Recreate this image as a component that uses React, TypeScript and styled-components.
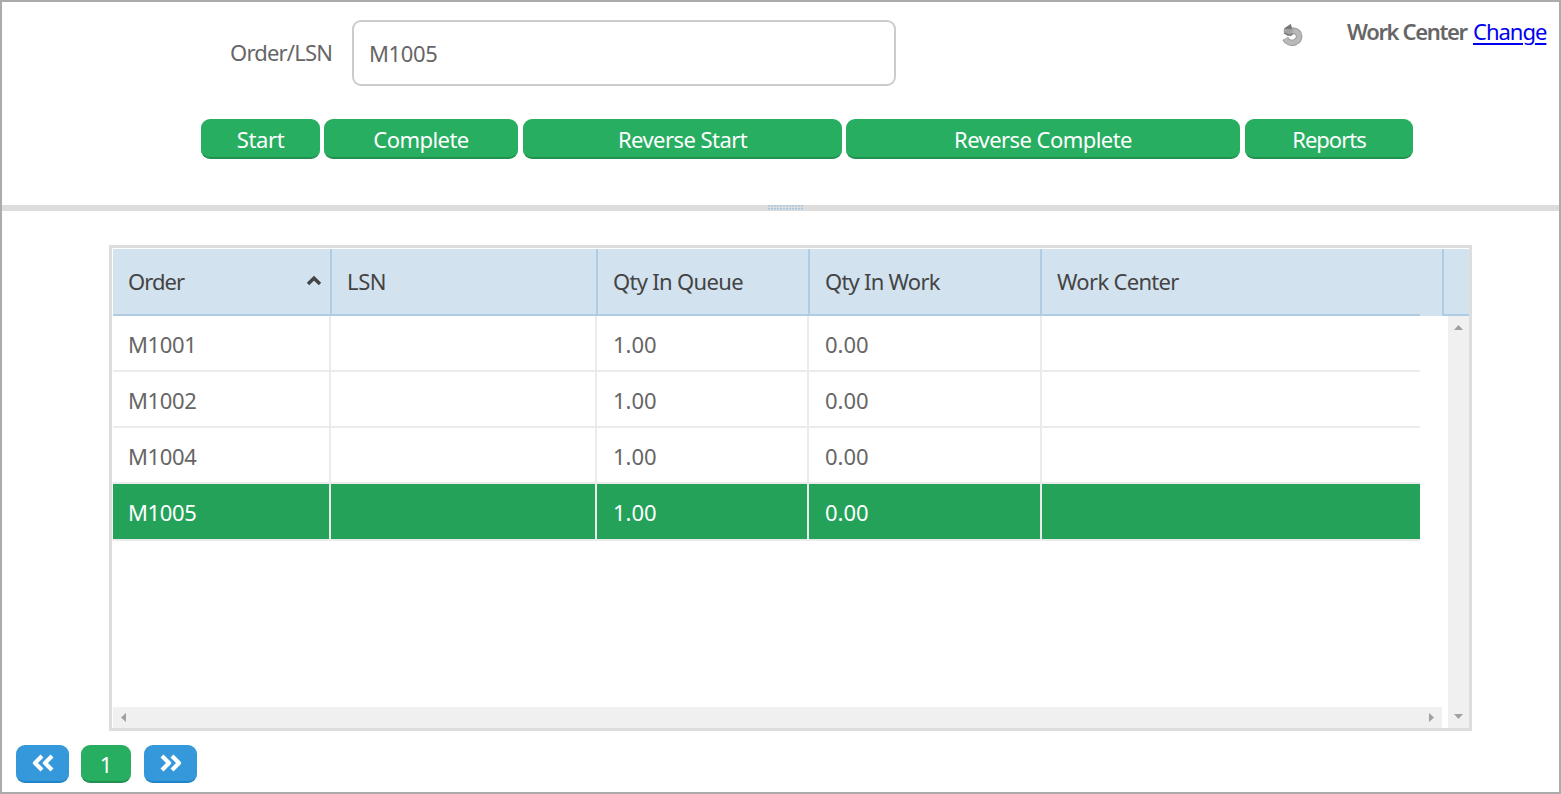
import React from "react";
import styled, { createGlobalStyle } from "styled-components";

const Global = createGlobalStyle`
  * { box-sizing: border-box; }
  body { margin: 0; background: #fff; font-family: "Noto Sans", "Open Sans", sans-serif; font-size: 22px; color: #666; }
  button, input { font: inherit; margin: 0; }
`;

const Frame = styled.main`
  width: 1561px;
  height: 794px;
  border: 2px solid #ababab;
  display: flex;
  flex-direction: column;
  overflow: hidden;
`;
const TopPane = styled.section`
  height: 203px;
  flex: none;
  padding-top: 18px;
`;
const SearchRow = styled.div`
  display: flex;
  height: 66px;
  padding-left: 228px;
`;
const Tracked = styled.span<{ $ls?: number }>`
  letter-spacing: ${(p) => p.$ls ?? 0}px;
  white-space: nowrap;
`;
const Label = styled.label`
  width: 122px;
  flex: none;
  line-height: 64px;
`;
const OrderInput = styled.input`
  width: 544px;
  height: 66px;
  flex: none;
  border: 2px solid #ccc;
  border-radius: 9px;
  padding: 0 15px;
  color: #666;
  letter-spacing: -0.35px;
  outline: none;
`;
const RefreshButton = styled.button`
  width: 22px;
  height: 24px;
  flex: none;
  border: 0;
  padding: 0;
  background: none;
  margin: 3px 0 0 385px;
`;
const WorkCenter = styled.div`
  margin-left: 44px;
  line-height: 24px;
  margin-top: -1px;
  white-space: nowrap;
  display: flex;
`;
const WorkCenterTitle = styled.strong<{ $ls: number }>`
  width: 126px;
  flex: none;
  font-weight: 600;
  letter-spacing: ${(p) => p.$ls}px;
`;
const ChangeLink = styled.a<{ $ls: number }>`
  color: #0000ee;
  letter-spacing: ${(p) => p.$ls}px;
  text-decoration: underline;
  text-decoration-thickness: 2px;
  text-underline-offset: 3px;
`;
const Actions = styled.div`
  display: flex;
  margin-top: 33px;
  padding-left: 199px;
`;
const Button = styled.button<{ $w: number; $gap?: number; $blue?: boolean; $h?: number }>`
  width: ${(p) => p.$w}px;
  height: ${(p) => p.$h ?? 40}px;
  margin-right: ${(p) => p.$gap ?? 0}px;
  flex: none;
  border: 0;
  border-bottom: 2px solid ${(p) => (p.$blue ? "#2383c8" : "#219150")};
  border-radius: 9px;
  background: ${(p) => (p.$blue ? "#3498db" : "#28ae61")};
  color: #fff;
  padding: ${(p) => (p.$blue ? "0" : "1px 0 0")};
  display: flex;
  align-items: center;
  justify-content: center;
  line-height: 30px;
`;
const Splitter = styled.div`
  height: 6px;
  flex: none;
  background: #ddd;
  display: flex;
  padding-left: 766px;
`;
const Grip = styled.div`
  width: 36px;
  height: 6px;
  background:
    linear-gradient(90deg, transparent 2px, #ddd 2px) 0 0 / 3px 6px,
    linear-gradient(#a9c8df 1px, #bdd4e5 1px, #bdd4e5 2px, #ddd 2px) 0 0 / 3px 3px;
`;
const Grid = styled.section`
  margin: 34px 0 0 107px;
  width: 1363px;
  height: 486px;
  flex: none;
  border: 3px solid #ddd;
  padding: 1px 0 0 1px;
`;
const HeaderRow = styled.div`
  display: flex;
  height: 67px;
  background: #d2e2ef;
  color: #444;
`;
const HeaderCell = styled.div<{ $w: number; $divider?: boolean }>`
  width: ${(p) => p.$w}px;
  flex: none;
  display: flex;
  justify-content: space-between;
  padding: 0 8px 0 15px;
  line-height: 65px;
  border-bottom: 2px solid #aecde4;
  border-right: ${(p) => (p.$divider ? "2px solid #aecde4" : "0")};
`;
const HeaderGap = styled.div`
  width: 22px;
`;
const HeaderEnd = styled.div`
  width: 27px;
  border-left: 2px solid #aecde4;
  border-bottom: 2px solid #aecde4;
`;
const SortIcon = styled.svg`
  margin-top: 26px;
`;
const Body = styled.div`
  display: flex;
  justify-content: space-between;
  height: 412px;
`;
const Scroller = styled.div`
  display: flex;
  flex-direction: column;
  justify-content: space-between;
  width: 1329px;
`;
const Row = styled.div<{ $selected: boolean }>`
  display: flex;
  width: 1307px;
  height: ${(p) => (p.$selected ? 57 : 56)}px;
  border-bottom: 2px solid #ebebeb;
  background: ${(p) => (p.$selected ? "#25a25a" : "transparent")};
  color: ${(p) => (p.$selected ? "#fff" : "#666")};
`;
const Rows = styled.div`
  height: 391px;
`;
const Cell = styled.div<{ $w: number; $first: boolean; $last: boolean }>`
  width: ${(p) => p.$w}px;
  flex: none;
  padding-left: ${(p) => (p.$first ? 15 : 16)}px;
  line-height: 56px;
  border-right: ${(p) => (p.$last ? "0" : "2px solid #ebebeb")};
`;
const HTrack = styled.div`
  height: 21px;
  background: #f0f0f0;
  display: flex;
  align-items: center;
  justify-content: space-between;
  padding: 0 8px;
`;
const VTrack = styled.div`
  width: 21px;
  background: #f0f0f0;
  display: flex;
  flex-direction: column;
  align-items: center;
  justify-content: space-between;
  padding: 9px 0;
`;
const Pager = styled.nav`
  display: flex;
  margin: 14px 0 0 14px;
`;

const Arrow = ({ dir }: { dir: "up" | "down" | "left" | "right" }) => {
  const vertical = dir === "up" || dir === "down";
  const d = { up: "M4.5 0L9 5H0Z", down: "M0 0H9L4.5 5Z", left: "M5 0V9L0 4.5Z", right: "M0 0L5 4.5L0 9Z" }[dir];
  return (
    <svg width={vertical ? 9 : 5} height={vertical ? 5 : 9} display="block">
      <path d={d} fill="#a0a0a0" />
    </svg>
  );
};

const Chevrons = ({ flip }: { flip?: boolean }) => (
  <svg width="22" height="18" viewBox="0 0 22 18">
    <path
      d={flip ? "M2 2L9 9L2 16M12 2L19 9L12 16" : "M10 2L3 9L10 16M20 2L13 9L20 16"}
      fill="none"
      stroke="#fff"
      strokeWidth="4.2"
      strokeLinejoin="round"
    />
  </svg>
);

const columns = [
  { title: "Order", head: 219, body: 218, ls: -0.95 },
  { title: "LSN", head: 266, body: 266, ls: -0.4 },
  { title: "Qty In Queue", head: 212, body: 212, ls: -0.68 },
  { title: "Qty In Work", head: 232, body: 233, ls: -0.75 },
  { title: "Work Center", head: 378, body: 378, ls: -0.68 },
];
const orders = ["M1001", "M1002", "M1004", "M1005"];
const actions = [
  { text: "Start", w: 119, gap: 4, ls: -0.4 },
  { text: "Complete", w: 194, gap: 5, ls: -0.55 },
  { text: "Reverse Start", w: 319, gap: 4, ls: -0.55 },
  { text: "Reverse Complete", w: 394, gap: 5, ls: -0.55 },
  { text: "Reports", w: 168, gap: 0, ls: -1 },
];

export default function App() {
  return (
    <Frame>
      <Global />
      <TopPane>
        <SearchRow>
          <Label htmlFor="order"><Tracked $ls={-0.8}>Order/LSN</Tracked></Label>
          <OrderInput id="order" defaultValue="M1005" />
          <RefreshButton aria-label="Refresh">
            <svg width="22" height="24" viewBox="0 0 22 24" display="block">
              <path d="M4.2 15.5C6 19.2 10 20.8 14 19.2C20 16.5 19.5 8.5 12 7.5" fill="none" stroke="#999" strokeWidth="6.4" />
              <path d="M4.2 15.5C6 19.2 10 20.8 14 19.2C20 16.5 19.5 8.5 12 7.5" fill="none" stroke="#b9b9b9" strokeWidth="4.6" />
              <path d="M9.8 1L3 5.6L2.6 9L6.5 13.2L11.5 11.5V9.6L13 5L10.5 4Z" fill="#a3a3a3" />
              <path d="M9.8 1L3 5.8L10.5 6.2L10.5 3.6Z" fill="#777" />
              <path d="M3 10L9.5 12.4L12 10.4" fill="none" stroke="#808080" strokeWidth="1.6" />
            </svg>
          </RefreshButton>
          <WorkCenter>
            <WorkCenterTitle $ls={-1.35}>Work Center</WorkCenterTitle>
            <ChangeLink href="#" $ls={-1}>Change</ChangeLink>
          </WorkCenter>
        </SearchRow>
        <Actions>
          {actions.map((a) => (
            <Button key={a.text} $w={a.w} $gap={a.gap}><Tracked $ls={a.ls}>{a.text}</Tracked></Button>
          ))}
        </Actions>
      </TopPane>
      <Splitter><Grip /></Splitter>
      <Grid>
        <HeaderRow>
          {columns.map((c, i) => (
            <HeaderCell key={c.title} $w={c.head} $divider={i < 4}>
              <Tracked $ls={c.ls}>{c.title}</Tracked>
              {i === 0 && (
                <SortIcon width="16" height="12" viewBox="0 0 16 12">
                  <path d="M2 9L8 3.2L14 9" fill="none" stroke="#444" strokeWidth="3.4" />
                </SortIcon>
              )}
            </HeaderCell>
          ))}
          <HeaderGap />
          <HeaderEnd />
        </HeaderRow>
        <Body>
          <Scroller>
            <Rows>
              {orders.map((o) => (
                <Row key={o} $selected={o === "M1005"}>
                  {[o, "", "1.00", "0.00", ""].map((v, i) => (
                    <Cell key={i} $w={columns[i].body} $first={i === 0} $last={i === 4}>
                      <Tracked $ls={i === 0 ? -0.35 : 0}>{v}</Tracked>
                    </Cell>
                  ))}
                </Row>
              ))}
            </Rows>
            <HTrack><Arrow dir="left" /><Arrow dir="right" /></HTrack>
          </Scroller>
          <VTrack><Arrow dir="up" /><Arrow dir="down" /></VTrack>
        </Body>
      </Grid>
      <Pager>
        <Button $w={53} $h={38} $gap={12} $blue aria-label="Previous"><Chevrons /></Button>
        <Button $w={50} $h={38} $gap={13}>1</Button>
        <Button $w={53} $h={38} $blue aria-label="Next"><Chevrons flip /></Button>
      </Pager>
    </Frame>
  );
}
